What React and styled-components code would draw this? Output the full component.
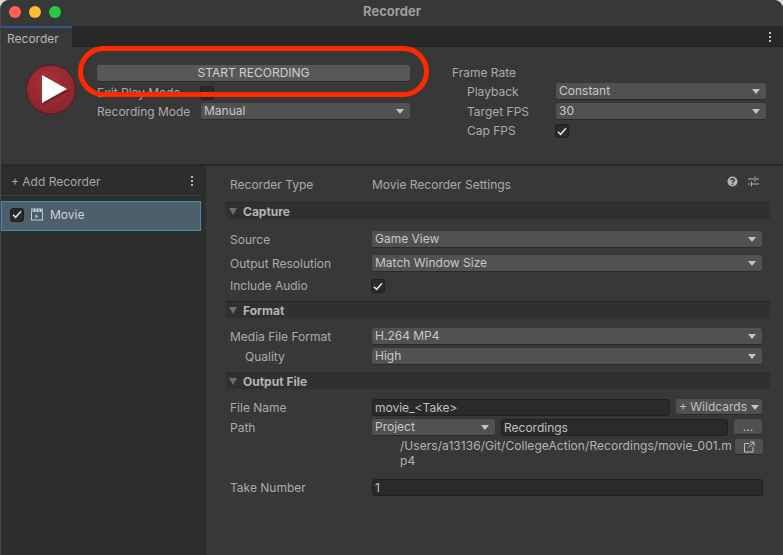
import React from "react";
import styled, { createGlobalStyle } from "styled-components";

const Global = createGlobalStyle`
  html, body { margin: 0; padding: 0; background: #d8d8d8; }
  body { font-family: Inter, "Noto Sans", "Liberation Sans", sans-serif; font-size: 12px; color: #b4b4b4; }
  * { box-sizing: border-box; }
`;

const Window = styled.div`
  position: relative;
  width: 783px;
  height: 555px;
  background: #383838;
  border-radius: 9px 9px 0 0;
  border-left: 1px solid #4a4a4a;
  overflow: hidden;
  display: flex;
  flex-direction: column;
`;
const TitleBar = styled.div`
  height: 26px;
  flex: none;
  background: #383838;
  display: flex;
  align-items: center;
  justify-content: center;
  position: relative;
  padding-bottom: 5px;
  font-weight: 700;
  font-size: 13px;
  color: #9c9c9c;
`;
const Lights = styled.div`
  position: absolute;
  left: 8px;
  top: 6px;
  display: flex;
  gap: 8px;
`;
const Light = styled.span`
  width: 12px;
  height: 12px;
  border-radius: 50%;
  background: ${(p) => p.$c};
`;
const TabBar = styled.div`
  height: 21px;
  flex: none;
  background: #282828;
  display: flex;
  align-items: stretch;
  justify-content: space-between;
  border-bottom: 1px solid #232323;
`;
const Tab = styled.div`
  width: 71px;
  margin-bottom: -1px;
  background: #383838;
  border-top: 2px solid #2f5a85;
  padding: 3px 0 0 6px;
  color: #b8b8b8;
  line-height: 15px;
`;
const Kebab = styled.div`
  width: 2px;
  margin: 6px 12px 0 0;
  height: 10px;
  display: flex;
  flex-direction: column;
  justify-content: space-between;
  & > i { display: block; width: 2px; height: 2px; background: #c0c0c0; }
`;
const TopPanel = styled.div`
  height: 119px;
  flex: none;
  display: flex;
  background: #383838;
  border-bottom: 2px solid #282828;
`;
const PlayCol = styled.div`
  width: 96px;
  flex: none;
  padding: 17px 0 0 25px;
`;
const MainCol = styled.div`
  width: 313px;
  flex: none;
  padding-top: 18px;
  display: flex;
  flex-direction: column;
`;
const RateCol = styled.div`
  margin-left: 42px;
  padding-top: 18px;
  width: 314px;
`;
const StartButton = styled.div`
  height: 17px;
  background: #585858;
  border-radius: 3px;
  border-bottom: 1px solid #2a2a2a;
  text-align: center;
  line-height: 16px;
  color: #d0d0d0;
  font-size: 12px;
`;
const TopRow = styled.div`
  display: grid;
  grid-template-columns: ${(p) => p.$label || 104}px 1fr;
  align-items: center;
  height: 16px;
  margin-top: ${(p) => p.$mt || 0}px;
  padding-left: ${(p) => p.$indent || 0}px;
`;
const Label = styled.div`
  color: #ababab;
  line-height: 16px;
  white-space: nowrap;
`;
const Select = styled.div`
  height: 17px;
  background: #515151;
  border-radius: 3px;
  border-bottom: 1px solid #2a2a2a;
  display: flex;
  align-items: center;
  justify-content: space-between;
  padding: 0 6px 2px 3px;
  color: #c8c8c8;
  line-height: 15px;
  white-space: nowrap;
  width: ${(p) => (p.$w ? p.$w + "px" : "auto")};
  flex: ${(p) => (p.$w ? "none" : 1)};
`;
const Caret = styled.span`
  width: 0;
  height: 0;
  border-left: 4px solid transparent;
  border-right: 4px solid transparent;
  border-top: 5px solid #c4c4c4;
  margin-top: 2px;
`;
const Check = styled.div`
  width: 14px;
  height: 14px;
  border-radius: 3px;
  background: #2a2a2a;
  border: 1px solid #202020;
  display: flex;
  align-items: center;
  justify-content: center;
`;
const FormCheck = styled(Check)`
  margin-left: -1px;
`;
const Body = styled.div`
  flex: 1;
  display: flex;
  min-height: 0;
`;
const Sidebar = styled.div`
  width: 205px;
  flex: none;
  background: #2d2d2d;
  border-top: 1px solid #2a2a2a;
`;
const SideHead = styled.div`
  height: 29px;
  width: 200px;
  display: flex;
  align-items: center;
  justify-content: space-between;
  padding: 0 8px 0 10px;
  border-bottom: 1px solid #3c3c3c;
  color: #a8a8a8;
`;
const SmallKebab = styled(Kebab)`
  margin: 0;
  & > i { background: #b8b8b8; }
`;
const ListItem = styled.div`
  width: 200px;
  height: 30px;
  margin-top: 5px;
  background: #4d5f68;
  border: 1px solid #3a8fbf;
  display: flex;
  align-items: center;
  padding: 0 0 3px 8px;
  gap: 7px;
  color: #d2d2d2;
`;
const Inspector = styled.div`
  flex: 1;
  background: #383838;
  padding: 11px 13px 0 20px;
`;
const InspHead = styled.div`
  display: grid;
  grid-template-columns: 142px 1fr auto;
  align-items: center;
  height: 16px;
  padding-left: 4px;
  margin-right: 11px;
`;
const HeadIcons = styled.div`
  display: flex;
  align-items: center;
  gap: 10px;
  margin-top: -8px;
`;
const Section = styled.div`
  height: 17px;
  margin-top: ${(p) => p.$mt}px;
  background: #303030;
  border-top: 1px solid #2a2a2a;
  display: flex;
  align-items: center;
  gap: 6px;
  padding-left: 3px;
  font-weight: 700;
  color: #b4b4b4;
`;
const Fold = styled.span`
  width: 0;
  height: 0;
  border-left: 4px solid transparent;
  border-right: 4px solid transparent;
  border-top: 7px solid #6e6e6e;
`;
const Row = styled.div`
  display: grid;
  grid-template-columns: ${(p) => 142 - (p.$indent || 0)}px 1fr;
  align-items: center;
  height: ${(p) => p.$h || 16}px;
  margin-top: ${(p) => p.$mt || 0}px;
  margin-right: ${(p) => p.$right ?? 8}px;
  padding-left: ${(p) => 4 + (p.$indent || 0)}px;
`;
const Field = styled.div`
  height: 17px;
  background: #2a2a2a;
  border: 1px solid #212121;
  border-radius: 3px;
  padding: 0 2px;
  line-height: 15px;
  color: #c0c0c0;
  flex: 1;
  white-space: nowrap;
`;
const Inline = styled.div`
  display: flex;
  align-items: flex-start;
  gap: 6px;
`;
const Btn = styled.div`
  height: 16px;
  width: ${(p) => p.$w}px;
  flex: none;
  background: #505050;
  border-radius: 3px;
  border-bottom: 1px solid #2a2a2a;
  display: flex;
  align-items: center;
  justify-content: center;
  gap: 4px;
  color: #c0c0c0;
  line-height: 15px;
  white-space: nowrap;
`;
const PathBlock = styled.div`
  display: flex;
  margin: 3px 7px 0 34px;
  height: 28px;
  justify-content: space-between;
  padding-left: 140px;
`;
const PathText = styled.div`
  width: 333px;
  margin-top: -1px;
  line-height: 15px;
  color: #b4b4b4;
  word-break: break-all;
  letter-spacing: 0.05px;
`;
const Annotation = styled.div`
  position: absolute;
  left: 77px;
  top: 46px;
  width: 351px;
  height: 51px;
  border: 5px solid #ff2a00;
  border-radius: 26px;
  pointer-events: none;
`;

const CheckMark = () => (
  <svg width="10" height="9" viewBox="0 0 10 9" fill="none">
    <path d="M1 4.8 L3.6 7.3 L9 1.3" stroke="#e4e4e4" strokeWidth="1.5" />
  </svg>
);

const PlayBadge = () => (
  <svg width="52" height="52" viewBox="0 0 52 52">
    <defs>
      <radialGradient id="rb" cx="0.45" cy="0.35" r="0.7">
        <stop offset="0" stopColor="#ab3038" />
        <stop offset="1" stopColor="#86252e" />
      </radialGradient>
    </defs>
    <circle cx="25" cy="25.5" r="24.5" fill="url(#rb)" stroke="#5c1a20" strokeWidth="1" />
    <path d="M16 11 L41 25 L16 39 Z" fill="#5a1b20" opacity="0.6" transform="translate(1.5 2)" />
    <path d="M16 11 L41 25 L16 39 Z" fill="#fff" />
  </svg>
);

const MovieIcon = () => (
  <svg width="12" height="13" viewBox="0 0 12 13" fill="none">
    <rect x="0.5" y="1" width="11" height="11" stroke="#c4ccd0" strokeWidth="1" />
    <path d="M0.5 1H11.5V4H0.5Z" fill="#8d9aa1" />
    <path d="M3 1L4 4M6 1L7 4M9 1L10 4" stroke="#dfe4e6" strokeWidth="1" />
    <path d="M4.5 6.5 L7.5 8.2 L4.5 10 Z" fill="#c4ccd0" />
  </svg>
);

const HelpIcon = () => (
  <svg width="11" height="11" viewBox="0 0 11 11">
    <circle cx="5.5" cy="5.5" r="5" fill="#b4b4b4" />
    <path d="M3.7 4.2 C3.8 2.3 7.3 2.3 7.3 4.2 C7.3 5.4 5.5 5.3 5.5 6.7" fill="none" stroke="#383838" strokeWidth="1.4" />
    <rect x="4.8" y="7.6" width="1.4" height="1.4" fill="#383838" />
  </svg>
);

const SlidersIcon = () => (
  <svg width="11" height="11" viewBox="0 0 11 11" fill="none" stroke="#b4b4b4" strokeWidth="1">
    <path d="M0 3H6M8 3H11M7 0.5V5.5M0 8H2M4 8H11M3.5 5.5V10.5" />
  </svg>
);

const OpenIcon = () => (
  <svg width="12" height="12" viewBox="0 0 12 12" fill="none" stroke="#c0c0c0" strokeWidth="1">
    <path d="M6.5 2.5H1.5V11H10V6M7 1H11V5M11 1L5.5 6.5" />
  </svg>
);

const Dropdown = ({ children, w }) => (
  <Select $w={w}>
    {children}
    <Caret />
  </Select>
);

export default function App() {
  return (
    <Window>
      <Global />
      <TitleBar>
        <Lights>
          <Light $c="#ff5f57" />
          <Light $c="#febc2e" />
          <Light $c="#28c840" />
        </Lights>
        Recorder
      </TitleBar>
      <TabBar>
        <Tab>Recorder</Tab>
        <Kebab><i /><i /><i /></Kebab>
      </TabBar>
      <TopPanel>
        <PlayCol><PlayBadge /></PlayCol>
        <MainCol>
          <StartButton>START RECORDING</StartButton>
          <TopRow $mt={3}>
            <Label>Exit Play Mode</Label>
            <FormCheck />
          </TopRow>
          <TopRow $mt={2}>
            <Label>Recording Mode</Label>
            <Dropdown>Manual</Dropdown>
          </TopRow>
        </MainCol>
        <RateCol>
          <TopRow><Label>Frame Rate</Label></TopRow>
          <TopRow $mt={2} $indent={15} $label={89}>
            <Label>Playback</Label>
            <Dropdown>Constant</Dropdown>
          </TopRow>
          <TopRow $mt={4} $indent={15} $label={89}>
            <Label>Target FPS</Label>
            <Dropdown>30</Dropdown>
          </TopRow>
          <TopRow $mt={4} $indent={15} $label={89}>
            <Label>Cap FPS</Label>
            <FormCheck><CheckMark /></FormCheck>
          </TopRow>
        </RateCol>
      </TopPanel>
      <Body>
        <Sidebar>
          <SideHead>
            + Add Recorder
            <SmallKebab><i /><i /><i /></SmallKebab>
          </SideHead>
          <ListItem>
            <Check><CheckMark /></Check>
            <MovieIcon />
            Movie
          </ListItem>
        </Sidebar>
        <Inspector>
          <InspHead>
            <Label>Recorder Type</Label>
            <Label>Movie Recorder Settings</Label>
            <HeadIcons><HelpIcon /><SlidersIcon /></HeadIcons>
          </InspHead>
          <Section $mt={9}><Fold />Capture</Section>
          <Row $mt={12}><Label>Source</Label><Dropdown>Game View</Dropdown></Row>
          <Row $mt={8}><Label>Output Resolution</Label><Dropdown>Match Window Size</Dropdown></Row>
          <Row $mt={7}><Label>Include Audio</Label><FormCheck><CheckMark /></FormCheck></Row>
          <Section $mt={7}><Fold />Format</Section>
          <Row $mt={10}><Label>Media File Format</Label><Dropdown>H.264 MP4</Dropdown></Row>
          <Row $mt={4} $indent={15}><Label>Quality</Label><Dropdown>High</Dropdown></Row>
          <Section $mt={8}><Fold />Output File</Section>
          <Row $mt={10} $h={17}>
            <Label>File Name</Label>
            <Inline>
              <Field>movie_&lt;Take&gt;</Field>
              <Btn $w={86}>+ Wildcards <Caret /></Btn>
            </Inline>
          </Row>
          <Row $mt={3} $h={17}>
            <Label>Path</Label>
            <Inline>
              <Dropdown w={123}>Project</Dropdown>
              <Field>Recordings</Field>
              <Btn $w={28}>...</Btn>
            </Inline>
          </Row>
          <PathBlock>
            <PathText>/Users/a13136/Git/CollegeAction/Recordings/movie_001.mp4</PathText>
            <Btn $w={28}><OpenIcon /></Btn>
          </PathBlock>
          <Row $mt={12} $h={17} $right={7}>
            <Label>Take Number</Label>
            <Field>1</Field>
          </Row>
        </Inspector>
      </Body>
      <Annotation />
    </Window>
  );
}
